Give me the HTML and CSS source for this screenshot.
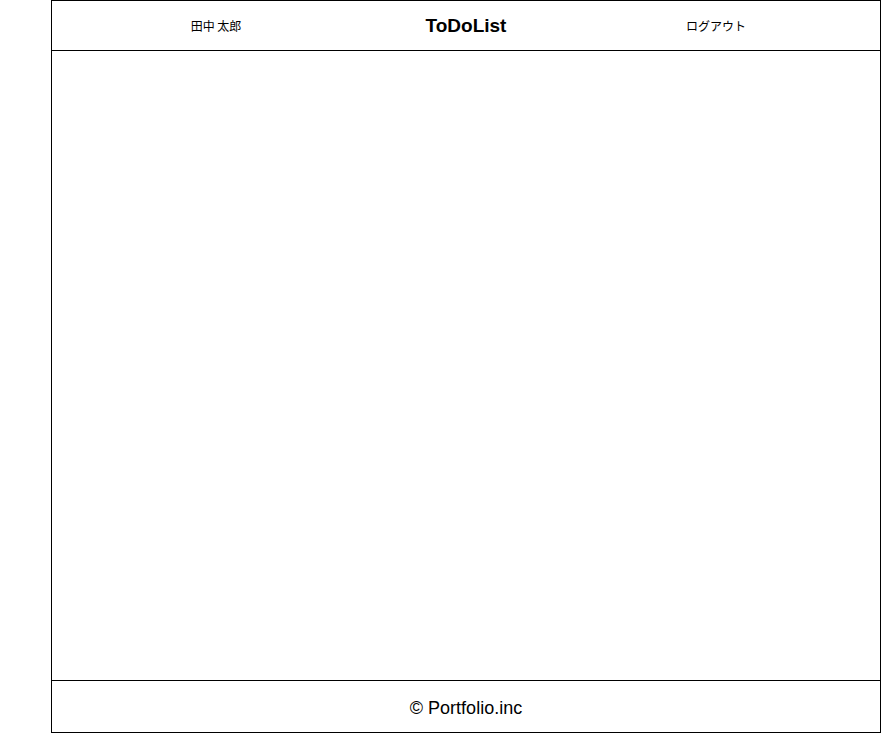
FILE: index.html
```html
<!DOCTYPE html>
<html lang="ja">
<head>
<meta charset="utf-8">
<title>ToDoList</title>
<link rel="stylesheet" href="styles.css">
</head>
<body>
<div class="page">
  <header class="header">
    <div class="user">田中 太郎</div>
    <h1 class="title">ToDoList</h1>
    <div class="logout">ログアウト</div>
  </header>
  <main class="main"></main>
  <footer class="footer">© Portfolio.inc</footer>
</div>
</body>
</html>
```
FILE: styles.css
```css
html, body {
  margin: 0;
  padding: 0;
  background: #fff;
}
body {
  font-family: "Liberation Sans", Arial, "Noto Sans CJK JP", sans-serif;
  color: #000;
}
.page {
  box-sizing: border-box;
  margin-left: 51px;
  width: 830px;
  height: 733px;
  border: 1px solid #000;
  display: flex;
  flex-direction: column;
}
.header {
  box-sizing: border-box;
  height: 50px;
  border-bottom: 1px solid #000;
  display: grid;
  grid-template-columns: repeat(3, 250px);
  justify-content: center;
  align-items: center;
}
.user, .logout {
  text-align: center;
  font-family: "Noto Sans CJK JP", sans-serif;
  font-size: 12px;
}
.title {
  margin: 0;
  padding-top: 1px;
  text-align: center;
  font-family: "Liberation Sans", Arial, sans-serif;
  font-weight: bold;
  font-size: 19px;
}
.main {
  flex: 1;
}
.footer {
  box-sizing: border-box;
  height: 52px;
  border-top: 1px solid #000;
  display: flex;
  align-items: center;
  justify-content: center;
  padding-top: 4px;
  font-family: "Liberation Sans", Arial, sans-serif;
  font-size: 18px;
}
```
